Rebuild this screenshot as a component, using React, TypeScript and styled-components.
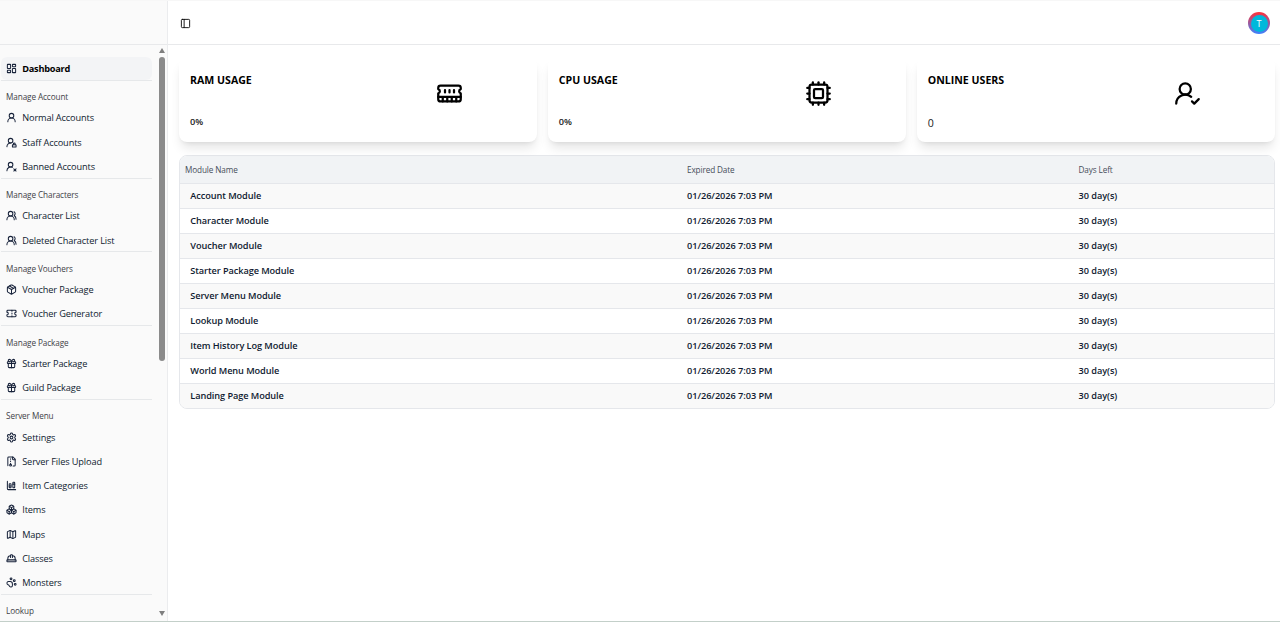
import React from "react";
import styled, { createGlobalStyle } from "styled-components";
import {
  LayoutDashboard, UserRound, UserRoundX, UsersRound, Package, Ticket, Gift, Settings,
  ChartColumnStacked, Boxes, Map as MapIcon, HardHat, PawPrint, Cpu,
  UserRoundCheck, PanelLeft,
} from "lucide-react";

const GlobalStyle = createGlobalStyle`
  *, *::before, *::after { box-sizing: border-box; }
  html, body { margin: 0; height: 622px; overflow: hidden; }
  body { background: #fff; font-family: "Open Sans", "Noto Sans", sans-serif; color: #0f172a; }
`;

const Shell = styled.div`
  display: flex;
  height: 622px;
  border-top: 1px solid #f7f7f7;
  border-bottom: 1px solid #c3cfc9;
`;

const Sidebar = styled.aside`
  width: 168px;
  flex: none;
  display: flex;
  flex-direction: column;
  background: #fafafa;
  border-right: 1px solid #ebecee;
`;

const SidebarHeader = styled.div`
  height: 44px;
  flex: none;
  border-bottom: 1px solid #e8e9eb;
`;

const SidebarBody = styled.div`
  flex: 1;
  min-height: 0;
  display: flex;
`;

const Nav = styled.nav`
  width: 152px;
  padding: 12.4px 0 0 1px;
  overflow: hidden;
`;

const Section = styled.section`
  display: flex;
  flex-direction: column;
  gap: 1.5px;
  border-bottom: 1px solid #e6e8ea;
  &:last-child { border-bottom: 0; }
`;

const SectionLabel = styled.div`
  height: 24.1px;
  padding: 8.7px 0 0 5px;
  font-size: 8.2px;
  line-height: 15px;
  font-weight: 500;
  letter-spacing: -0.1px;
  color: #3f4247;
  white-space: nowrap;
`;

const NavItem = styled.a<{ $active?: boolean }>`
  display: flex;
  align-items: center;
  gap: 5.2px;
  height: ${(p) => (p.$active ? "22.2px" : "22.8px")};
  padding: ${(p) => (p.$active ? "0 5px" : "0.8px 5px 0")};
  border-radius: 6px;
  font-size: 9.2px;
  font-weight: ${(p) => (p.$active ? 700 : 400)};
  letter-spacing: ${(p) => (p.$active ? "-0.23px" : "-0.12px")};
  color: ${(p) => (p.$active ? "#000" : "#0f1a30")};
  background: ${(p) => (p.$active ? "#f3f4f6" : "transparent")};
  white-space: nowrap;
  svg { flex: none; color: #17223a; stroke-width: 2.2; }
`;

const Scrollbar = styled.div`
  margin-left: auto;
  width: 10px;
  display: flex;
  flex-direction: column;
  align-items: center;
  padding: 3px 0 5px;
`;

const Thumb = styled.div`
  width: 6px;
  height: 304px;
  margin: 4px 0 auto;
  border-radius: 3px;
  background: #8b8b8b;
`;

const Arrow = styled.div<{ $down?: boolean }>`
  border: 3.5px solid transparent;
  border-top: ${(p) => (p.$down ? "5px solid #7f7f7f" : "0")};
  border-bottom: ${(p) => (p.$down ? "0" : "5px solid #7f7f7f")};
`;

const Page = styled.div`
  flex: 1;
  min-width: 0;
`;

const TopBar = styled.header`
  height: 44px;
  display: flex;
  align-items: center;
  justify-content: space-between;
  padding: 1px 10px 0 12px;
  border-bottom: 1px solid #e8e9eb;
  color: #0a0a0a;
`;

const Avatar = styled.div`
  width: 22px;
  height: 22px;
  padding: 2.5px;
  border-radius: 50%;
  background: linear-gradient(to bottom, #ff3038, #3b82ff);
`;

const AvatarFace = styled.div`
  display: grid;
  place-items: center;
  height: 100%;
  border-radius: 50%;
  background: #00b8db;
  color: #fff;
  font-size: 9px;
  font-weight: 500;
  line-height: 1;
`;

const Content = styled.main`
  padding: 13px 5px 0 11px;
`;

const Cards = styled.div`
  display: grid;
  grid-template-columns: repeat(3, 1fr);
  gap: 10.6px;
`;

const Card = styled.article`
  height: 84px;
  display: grid;
  grid-template-columns: 1fr 1fr;
  padding: 13px 11px 10px;
  border-radius: 8px;
  background: #fff;
  box-shadow: 0 8px 11px -2px rgba(0, 0, 0, 0.1), 0 3px 5px -3px rgba(0, 0, 0, 0.1);
`;

const CardText = styled.div`
  display: flex;
  flex-direction: column;
  justify-content: space-between;
`;

const CardTitle = styled.h2`
  margin: 0;
  font-size: 10.6px;
  line-height: 18px;
  font-weight: 700;
  letter-spacing: 0;
  color: #000;
`;

const CardValue = styled.div<{ $plain?: boolean }>`
  font-size: ${(p) => (p.$plain ? "10.6px" : "9.2px")};
  font-weight: ${(p) => (p.$plain ? 400 : 600)};
  line-height: ${(p) => (p.$plain ? "17px" : "20px")};
  color: #1a1a1a;
`;

const CardIcon = styled.div`
  padding: 8.5px 0 0 78px;
  color: #000;
  svg { display: block; stroke-width: 2; }
`;

const Table = styled.div`
  margin-top: 13px;
  border: 1px solid #e5e7eb;
  border-radius: 8px;
  overflow: hidden;
`;

const Row = styled.div<{ $head?: boolean; $striped?: boolean }>`
  display: grid;
  grid-template-columns: 502px 391.5px 1fr;
  align-items: center;
  height: ${(p) => (p.$head ? "28px" : "25px")};
  padding: ${(p) => (p.$head ? "0 0 0 5px" : "0 0 1px 5px")};
  background: ${(p) => (p.$head ? "#f1f3f5" : p.$striped ? "#f9f9f9" : "#fff")};
  font-size: ${(p) => (p.$head ? "8.2px" : "9.2px")};
  font-weight: ${(p) => (p.$head ? 500 : 600)};
  letter-spacing: ${(p) => (p.$head ? "-0.12px" : "-0.05px")};
  color: ${(p) => (p.$head ? "#474e5a" : "#0f1a30")};
  border-bottom: 1px solid #e5e7eb;
  &:last-child { border-bottom: 0; height: 24px; }
`;

const NameCell = styled.span`
  padding-left: 5.3px;
  letter-spacing: -0.08px;
`;

const line = {
  viewBox: "0 0 24 24", fill: "none", stroke: "currentColor", strokeWidth: 2,
  strokeLinecap: "round", strokeLinejoin: "round",
} as const;

const StaffIcon = ({ size }: { size: number }) => (
  <svg {...line} width={size} height={size}>
    <circle cx="10" cy="8" r="5" />
    <path d="M2 21a8 8 0 0 1 9-7.9" />
    <rect x="14" y="17" width="8" height="5" rx="1" />
    <path d="M20 17v-2a2 2 0 1 0-4 0v2" />
  </svg>
);

const ArchiveIcon = ({ size }: { size: number }) => (
  <svg {...line} width={size} height={size}>
    <path d="M10 12v-1M10 18v-2M10 7V6M14 2v4a2 2 0 0 0 2 2h4" />
    <path d="M15.5 22H18a2 2 0 0 0 2-2V7l-5-5H6a2 2 0 0 0-2 2v16a2 2 0 0 0 .274 1.01" />
    <circle cx="10" cy="20" r="2" />
  </svg>
);

const MemoryIcon = ({ size }: { size: number }) => (
  <svg {...line} width={size} height={size}>
    <path d="M6 19v-3M10 19v-3M14 19v-3M18 19v-3M8 11V9M16 11V9M12 11V9M2 15h20" />
    <path d="M2 7a2 2 0 0 1 2-2h16a2 2 0 0 1 2 2v1.1a2 2 0 0 0 0 3.837V17a2 2 0 0 1-2 2H4a2 2 0 0 1-2-2v-5.1a2 2 0 0 0 0-3.837Z" />
  </svg>
);

type Icon = React.ComponentType<{ size: number }>;
type Group = { label: string; items: [string, Icon][] };

const groups: Group[] = [
  { label: "Manage Account", items: [["Normal Accounts", UserRound], ["Staff Accounts", StaffIcon], ["Banned Accounts", UserRoundX]] },
  { label: "Manage Characters", items: [["Character List", UsersRound], ["Deleted Character List", UsersRound]] },
  { label: "Manage Vouchers", items: [["Voucher Package", Package], ["Voucher Generator", Ticket]] },
  { label: "Manage Package", items: [["Starter Package", Gift], ["Guild Package", Gift]] },
  {
    label: "Server Menu",
    items: [
      ["Settings", Settings], ["Server Files Upload", ArchiveIcon], ["Item Categories", ChartColumnStacked],
      ["Items", Boxes], ["Maps", MapIcon], ["Classes", HardHat], ["Monsters", PawPrint],
    ],
  },
  { label: "Lookup", items: [] },
];

const modules = [
  "Account", "Character", "Voucher", "Starter Package", "Server Menu", "Lookup",
  "Item History Log", "World Menu", "Landing Page",
];

const cards: { title: string; value: string; plain?: boolean; icon: Icon }[] = [
  { title: "RAM USAGE", value: "0%", icon: MemoryIcon },
  { title: "CPU USAGE", value: "0%", icon: Cpu },
  { title: "ONLINE USERS", value: "0", plain: true, icon: UserRoundCheck },
];

export default function App() {
  return (
    <>
      <GlobalStyle />
      <Shell>
        <Sidebar>
          <SidebarHeader />
          <SidebarBody>
            <Nav>
              <Section>
                <NavItem $active><LayoutDashboard size={11} />Dashboard</NavItem>
              </Section>
              {groups.map((g) => (
                <Section key={g.label}>
                  <SectionLabel>{g.label}</SectionLabel>
                  {g.items.map(([name, ItemIcon]) => (
                    <NavItem key={name}><ItemIcon size={11} />{name}</NavItem>
                  ))}
                </Section>
              ))}
            </Nav>
            <Scrollbar>
              <Arrow />
              <Thumb />
              <Arrow $down />
            </Scrollbar>
          </SidebarBody>
        </Sidebar>
        <Page>
          <TopBar>
            <PanelLeft size={11} />
            <Avatar><AvatarFace>T</AvatarFace></Avatar>
          </TopBar>
          <Content>
            <Cards>
              {cards.map(({ title, value, plain, icon: CardGlyph }) => (
                <Card key={title}>
                  <CardText>
                    <CardTitle>{title}</CardTitle>
                    <CardValue $plain={plain}>{value}</CardValue>
                  </CardText>
                  <CardIcon><CardGlyph size={27} /></CardIcon>
                </Card>
              ))}
            </Cards>
            <Table>
              <Row $head><span>Module Name</span><span>Expired Date</span><span>Days Left</span></Row>
              {modules.map((m, i) => (
                <Row key={m} $striped={i % 2 === 0}>
                  <NameCell>{m} Module</NameCell><span>01/26/2026 7:03 PM</span><span>30 day(s)</span>
                </Row>
              ))}
            </Table>
          </Content>
        </Page>
      </Shell>
    </>
  );
}
